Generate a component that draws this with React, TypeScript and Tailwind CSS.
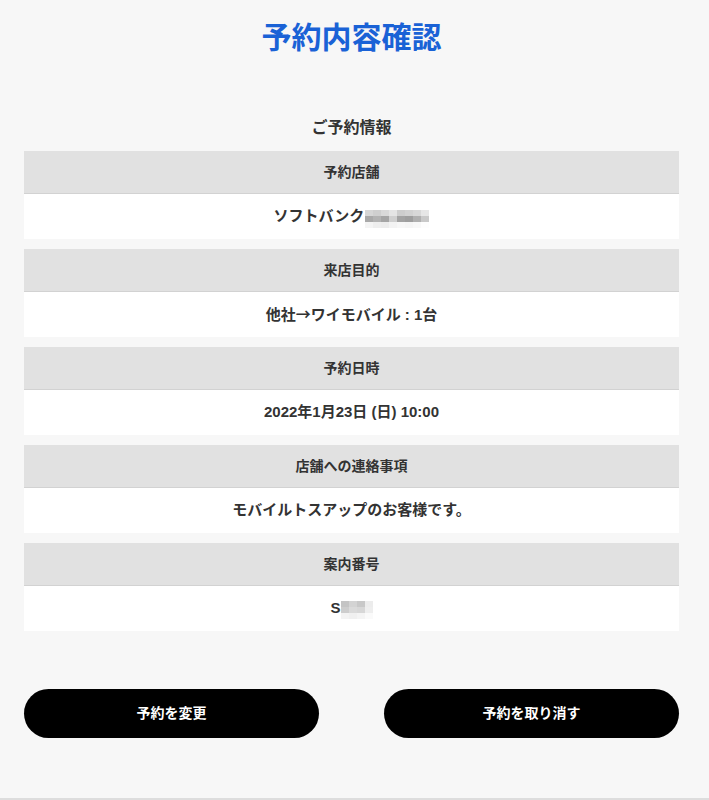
import React from "react";

const font = { fontFamily: '"Liberation Sans", "Noto Sans CJK JP", sans-serif' };
const cjk = { fontFamily: '"Noto Sans CJK JP", sans-serif' };

// Pixelated mosaic used to hide private values
function Mosaic({ rows }: { rows: string[][] }) {
  return (
    <span className="inline-flex flex-col align-middle blur-[0.4px]">
      {rows.map((r, i) => (
        <span key={i} className="flex">
          {r.map((c, j) => (
            <span key={j} className="block w-[8px] h-[6px]" style={{ backgroundColor: c }} />
          ))}
        </span>
      ))}
    </span>
  );
}

const storeMosaic = [
  ["#d6d6d6", "#cfcfcf", "#d9d9d9", "#e4e4e4", "#cdcdcd", "#d2d2d2", "#d8d8d8", "#e6e6e6"],
  ["#a9a9a9", "#b3b3b3", "#a5a5a5", "#cfcfcf", "#a3a3a3", "#9e9e9e", "#b0b0b0", "#c9c9c9"],
  ["#f4f4f4", "#eeeeee", "#ececec", "#f3f3f3", "#f7f7f7", "#f5f5f5", "#f8f8f8", "#fdfdfd"],
];

const numberMosaic = [
  ["#c4c4c4", "#d3d3d3", "#c8c8c8", "#ececec"],
  ["#cdcdcd", "#dadada", "#d7d7d7", "#eeeeee"],
  ["#f3f3f3", "#f0f0f0", "#f4f4f4", "#fafafa"],
];

const items: { label: string; value: React.ReactNode }[] = [
  {
    label: "予約店舗",
    value: (
      <span className="inline-flex items-center">
        ソフトバンク
        <span className="ml-[1px] mt-[4px]">
          <Mosaic rows={storeMosaic} />
        </span>
      </span>
    ),
  },
  {
    label: "来店目的",
    value: (
      <span>
        他社<span style={cjk}>→</span>ワイモバイル : 1台
      </span>
    ),
  },
  { label: "予約日時", value: "2022年1月23日 (日) 10:00" },
  { label: "店舗への連絡事項", value: "モバイルトスアップのお客様です。" },
  {
    label: "案内番号",
    value: (
      <span className="inline-flex items-center">
        S
        <span className="mt-[2px]">
          <Mosaic rows={numberMosaic} />
        </span>
      </span>
    ),
  },
];

export default function App() {
  return (
    <div className="min-h-[800px] bg-[#f7f7f7] border-b-2 border-[#dddddd] text-[#333333]" style={font}>
      <div className="pl-[24px] pr-[30px]">
        <h1 className="h-[74px] flex items-center justify-center text-[30px] font-bold text-[#1a62d6]">
          予約内容確認
        </h1>
        <div className="mt-[30px] h-[47px] flex items-center justify-center text-[16px] font-bold">
          ご予約情報
        </div>
        <div className="flex flex-col gap-[10px]">
          {items.map((it) => (
            <div key={it.label}>
              <div className="h-[43px] flex items-center justify-center bg-[#e1e1e1] border-b border-[#d2d2d2] text-[14px] font-bold">
                {it.label}
              </div>
              <div className="h-[45px] flex items-center justify-center bg-white text-[15px] font-bold">
                {it.value}
              </div>
            </div>
          ))}
        </div>
        <div className="mt-[58px] pb-[58px] flex justify-between">
          <button className="w-[295px] h-[49px] rounded-full bg-black text-white text-[14px] font-bold">
            予約を変更
          </button>
          <button className="w-[295px] h-[49px] rounded-full bg-black text-white text-[14px] font-bold">
            予約を取り消す
          </button>
        </div>
      </div>
    </div>
  );
}
